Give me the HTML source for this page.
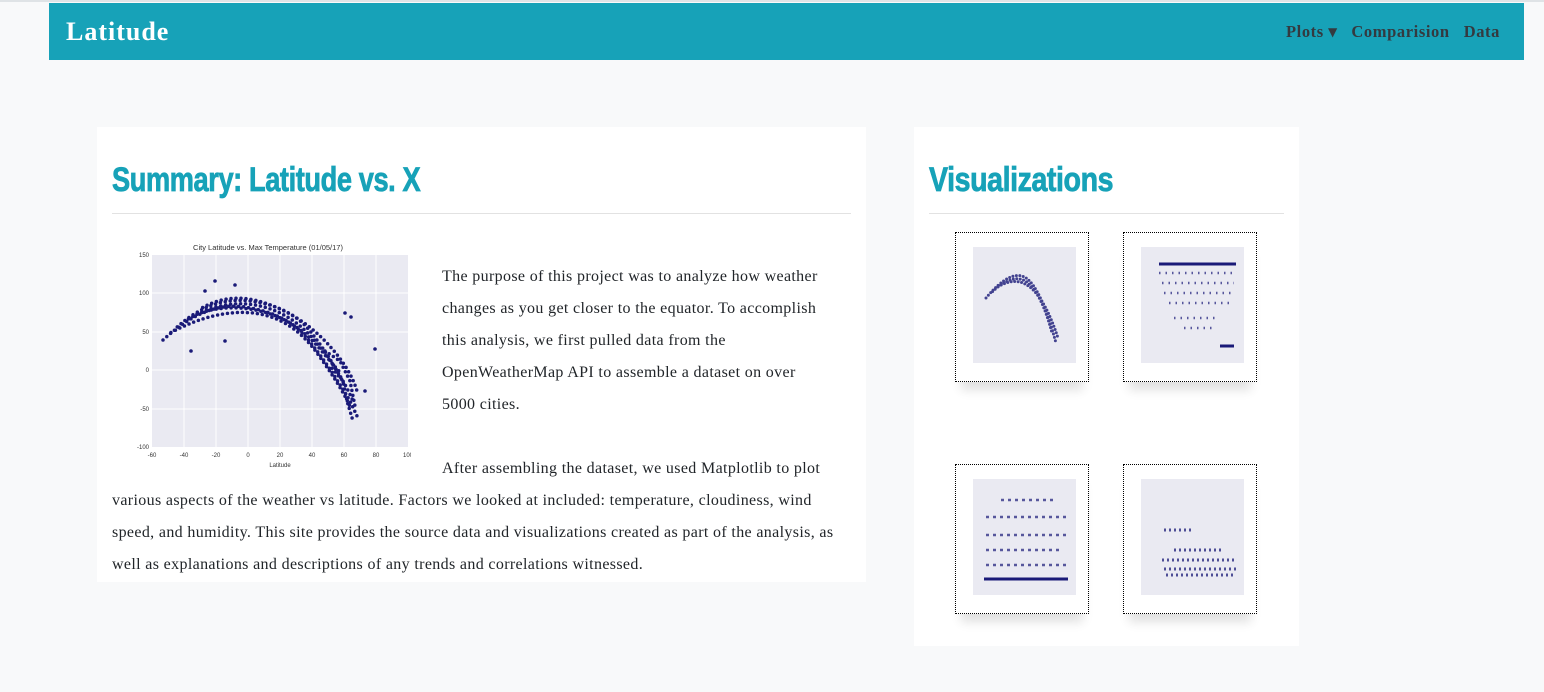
<!DOCTYPE html>
<html><head><style>
body{margin:0;width:1544px;height:692px;background:#f8f9fa;font-family:"Liberation Serif",serif;position:relative;overflow:hidden}
.top{position:absolute;left:0;top:0;width:1544px;height:2px;background:#dfe3e6}
nav{position:absolute;left:49px;top:3px;width:1475px;height:57px;background:#17a2b8}
.brand{position:absolute;left:17px;top:14px;color:#fff;font-weight:bold;font-size:26px;letter-spacing:1px}
.links{position:absolute;right:24px;top:19px;font-weight:bold;font-size:16.5px;letter-spacing:.6px;color:#343a40}
.links span{margin-left:14px}
.card{position:absolute;background:#fff}
h2{position:absolute;margin:0;font-family:"Liberation Sans",sans-serif;font-weight:bold;color:#17a2b8;font-size:34px;letter-spacing:-0.5px;transform:scaleX(0.8);transform-origin:left top;-webkit-text-stroke:.8px #17a2b8}
hr{position:absolute;margin:0;border:0;border-top:1px solid #e2e2e2;height:0}
p{position:absolute;margin:0;font-size:16px;letter-spacing:.35px;line-height:32px;color:#212529}
.th{position:absolute;width:132px;height:148px;border:1px dotted #000;background:#fff;box-shadow:0 14px 10px -6px rgba(0,0,0,.12)}
</style></head><body>
<div class="top"></div>
<nav><div class="brand">Latitude</div><div class="links"><span>Plots ▾</span><span>Comparision</span><span>Data</span></div></nav>
<div class="card" style="left:97px;top:127px;width:769px;height:455px">
<h2 style="left:15px;top:34px">Summary: Latitude vs. X</h2>
<hr style="left:15px;top:86px;width:739px">
<svg style="position:absolute;left:28px;top:114px" width="286" height="236" viewBox="0 0 286 236">
<text x="143" y="9" font-size="7.5" text-anchor="middle" fill="#333" font-family="Liberation Sans">City Latitude vs. Max Temperature (01/05/17)</text>
<rect x="27" y="14" width="256" height="192" fill="#eaeaf2"/>
<g stroke="#fff" stroke-width="1"><line x1="27" x2="283" y1="52" y2="52"/><line x1="27" x2="283" y1="91" y2="91"/><line x1="27" x2="283" y1="129" y2="129"/><line x1="27" x2="283" y1="168" y2="168"/><line x1="59" x2="59" y1="14" y2="206"/><line x1="91" x2="91" y1="14" y2="206"/><line x1="123" x2="123" y1="14" y2="206"/><line x1="155" x2="155" y1="14" y2="206"/><line x1="187" x2="187" y1="14" y2="206"/><line x1="219" x2="219" y1="14" y2="206"/><line x1="251" x2="251" y1="14" y2="206"/></g>
<g fill="none" stroke="#1a1a78" stroke-width="3.5" stroke-dasharray="0 5" stroke-linecap="round">
<path d="M38 99 Q80 60 120 66 T180 95 T225 160 L232 175"/>
<path d="M50 88 Q85 55 125 60 T185 90 T220 145" stroke-dashoffset="2"/>
<path d="M60 80 Q95 58 130 64 T190 100 T228 160" stroke-dashoffset="1"/>
<path d="M70 74 Q100 62 135 70 T195 108 T215 130" stroke-dashoffset="3"/>
<path d="M45 92 Q90 68 128 72 T192 112 T226 168" stroke-dashoffset="4"/>
<path d="M75 68 Q105 50 140 62 T200 100 T232 150" stroke-dashoffset="2"/>
<path d="M200 110 L215 120 L225 140 L230 165"/>
<path d="M205 125 L218 140 L222 160 L228 180" stroke-dashoffset="2"/>
</g>
<g fill="#1a1a78"><circle cx="90" cy="40" r="1.8"/><circle cx="110" cy="44" r="1.8"/><circle cx="80" cy="50" r="1.8"/><circle cx="220" cy="72" r="1.8"/><circle cx="226" cy="76" r="1.8"/><circle cx="250" cy="108" r="1.8"/><circle cx="66" cy="110" r="1.8"/><circle cx="100" cy="100" r="1.8"/><circle cx="240" cy="150" r="1.8"/></g>
<g font-size="6" fill="#333" font-family="Liberation Sans" text-anchor="end"><text x="24" y="16">150</text><text x="24" y="54">100</text><text x="24" y="93">50</text><text x="24" y="131">0</text><text x="24" y="170">-50</text><text x="24" y="208">-100</text></g>
<g font-size="6" fill="#333" font-family="Liberation Sans" text-anchor="middle"><text x="27" y="216">-60</text><text x="59" y="216">-40</text><text x="91" y="216">-20</text><text x="123" y="216">0</text><text x="155" y="216">20</text><text x="187" y="216">40</text><text x="219" y="216">60</text><text x="251" y="216">80</text><text x="283" y="216">100</text><text x="155" y="226">Latitude</text></g>
</svg>
<p style="left:345px;top:134px;width:390px">The purpose of this project was to analyze how weather changes as you get closer to the equator. To accomplish this analysis, we first pulled data from the OpenWeatherMap API to assemble a dataset on over 5000 cities.</p>
<p style="left:15px;top:326px;width:745px"><span style="padding-left:330px"></span>After assembling the dataset, we used Matplotlib to plot various aspects of the weather vs latitude. Factors we looked at included: temperature, cloudiness, wind speed, and humidity. This site provides the source data and visualizations created as part of the analysis, as well as explanations and descriptions of any trends and correlations witnessed.</p>
</div>
<div class="card" style="left:914px;top:127px;width:385px;height:519px">
<h2 style="left:15px;top:34px;transform:scaleX(0.84)">Visualizations</h2>
<hr style="left:15px;top:86px;width:355px">
<div class="th" style="left:41px;top:105px"><svg width="132" height="148"><rect x="17" y="14" width="103" height="116" fill="#eaeaf2"/><g fill="none" stroke="#1a1a78" stroke-width="3" stroke-dasharray="0 3.5" stroke-linecap="round" opacity=".8"><path d="M30 65 Q55 35 70 45 T100 110"/><path d="M35 60 Q58 38 72 50 T96 100" stroke-dashoffset="1.5"/><path d="M40 55 Q60 42 75 55 T102 105" stroke-dashoffset="1"/></g></svg></div>
<div class="th" style="left:209px;top:105px"><svg width="132" height="148"><rect x="17" y="14" width="103" height="116" fill="#eaeaf2"/><line x1="35" x2="112" y1="31" y2="31" stroke="#1a1a78" stroke-width="3"/><path d="M35 40 H110 M38 50 H110 M40 60 H108 M45 70 H105 M50 85 H95 M60 95 H90" stroke="#1a1a78" stroke-width="2.5" stroke-dasharray="1.5 5" opacity=".7"/><line x1="96" x2="110" y1="113" y2="113" stroke="#1a1a78" stroke-width="3"/></svg></div>
<div class="th" style="left:41px;top:337px"><svg width="132" height="148"><rect x="17" y="14" width="103" height="116" fill="#eaeaf2"/><path d="M30 52 H112 M30 70 H110 M30 85 H105 M30 100 H110 M45 35 H100" stroke="#1a1a78" stroke-width="2.5" stroke-dasharray="3 4" opacity=".7"/><line x1="28" x2="112" y1="114" y2="114" stroke="#1a1a78" stroke-width="3"/></svg></div>
<div class="th" style="left:209px;top:337px"><svg width="132" height="148"><rect x="17" y="14" width="103" height="116" fill="#eaeaf2"/><path d="M38 95 H112 M40 104 H112 M42 110 H112 M50 85 H100 M40 65 H70" stroke="#1a1a78" stroke-width="3" stroke-dasharray="2 3" opacity=".75"/></svg></div>
</div>
</body></html>
